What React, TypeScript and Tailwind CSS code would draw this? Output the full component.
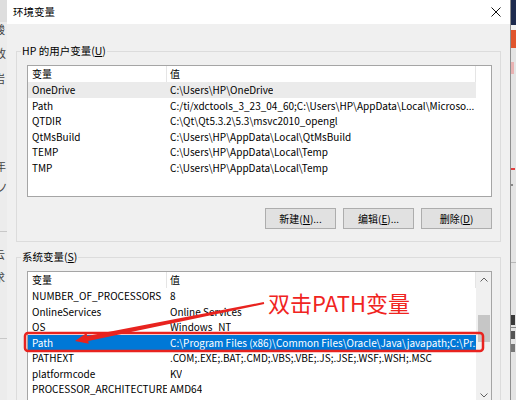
import React from "react";

const font = "font-['Noto_Sans_CJK_SC',sans-serif]";

const userVars: [string, string][] = [
  ["OneDrive", "C:\\Users\\HP\\OneDrive"],
  ["Path", "C:/ti/xdctools_3_23_04_60;C:\\Users\\HP\\AppData\\Local\\Microso..."],
  ["QTDIR", "C:\\Qt\\Qt5.3.2\\5.3\\msvc2010_opengl"],
  ["QtMsBuild", "C:\\Users\\HP\\AppData\\Local\\QtMsBuild"],
  ["TEMP", "C:\\Users\\HP\\AppData\\Local\\Temp"],
  ["TMP", "C:\\Users\\HP\\AppData\\Local\\Temp"],
];

const sysVars: [string, string][] = [
  ["NUMBER_OF_PROCESSORS", "8"],
  ["OnlineServices", "Online Services"],
  ["OS", "Windows_NT"],
  ["Path", "C:\\Program Files (x86)\\Common Files\\Oracle\\Java\\javapath;C:\\Pr..."],
  ["PATHEXT", ".COM;.EXE;.BAT;.CMD;.VBS;.VBE;.JS;.JSE;.WSF;.WSH;.MSC"],
  ["platformcode", "KV"],
  ["PROCESSOR_ARCHITECTURE", "AMD64"],
  ["PROCESSOR_IDENTIFIER", "Intel64 Family 6 Model 142 Stepping 10, GenuineIntel"],
  ["PROCESSOR_LEVEL", "6"],
];

const Header = () => (
  <div className="flex h-[16px] shrink-0 items-center leading-none">
    <div className="flex h-full w-[139px] items-center border-r border-[#e5e5e5] pl-[4px]">变量</div>
    <div className="flex h-full w-[309px] items-center border-r border-[#e5e5e5] pl-[3px]">值</div>
  </div>
);

const Row = ({ name, value, state }: { name: string; value: string; state?: "hover" | "sel" }) => (
  <div
    className={
      "flex h-[15.5px] w-[448px] shrink-0 whitespace-nowrap leading-[15.5px] " +
      (state === "sel" ? "bg-[#0078d7] text-white" : state === "hover" ? "bg-[#ebebeb]" : "")
    }
  >
    <div className="w-[139px] shrink-0 overflow-hidden pl-[4px]">{name}</div>
    <div className="overflow-hidden pl-[3px]">{value}</div>
  </div>
);

const Chevron = ({ up }: { up?: boolean }) => (
  <svg width="8" height="5" viewBox="0 0 8 5">
    <path d={up ? "M0.5 4.5 L4 1 L7.5 4.5" : "M0.5 0.5 L4 4 L7.5 0.5"} fill="none" stroke="#606060" strokeWidth="1" />
  </svg>
);

const Btn = ({ label, k, tail }: { label: string; k: string; tail: string }) => (
  <div className="flex h-[21px] w-[71px] items-center justify-center border border-[#adadad] bg-[#e1e1e1] leading-none">
    {label}(<span className="underline">{k}</span>){tail}
  </div>
);

export default function App() {
  return (
    <div className={`relative flex h-[400px] w-[516px] overflow-hidden bg-[#e6e6e6] text-[10px] text-black ${font}`}>
      {/* window behind, left */}
      <div className="flex w-[7px] shrink-0 flex-col overflow-hidden bg-[#ececec] text-[11px] leading-none text-[#444]">
        <div className="h-[22px] shrink-0 bg-[#dedede]" />
        <span className="-ml-[6px] mt-[2px]">酸</span>
        <span className="-ml-[5px] mt-[13px]">改</span>
        <span className="-ml-[6px] mt-[14px]">岩</span>
        <span className="-ml-[7px] mt-[9px]">a</span>
        <span className="-ml-[5px] mt-[57px]">年</span>
        <span className="-ml-[3px] mt-[10px]">ノ</span>
        <div className="mt-[38px] h-px shrink-0 bg-[#c8c8c8]" />
        <span className="-ml-[6px] mt-[17px]">云</span>
        <span className="-ml-[6px] mt-[12px]">求</span>
        <div className="mt-[55px] h-px shrink-0 bg-[#c8c8c8]" />
      </div>

      {/* dialog */}
      <div className="flex w-[504px] shrink-0 flex-col border-r border-[#8f8f8f] bg-[#f0f0f0]">
        <div className="flex h-[24px] shrink-0 items-center justify-between bg-white pl-[6px] pr-[9px]">
          <span className="text-[10.5px] leading-none">环境变量</span>
          <svg width="10" height="10" viewBox="0 0 10 10">
            <path d="M0.5 0.5 L9.5 9.5 M9.5 0.5 L0.5 9.5" stroke="#111" strokeWidth="1" />
          </svg>
        </div>

        <div className="flex flex-col px-[9px] pt-[20px]">
          <fieldset className="border border-[#dcdcdc] pb-[12px] pl-[10px] pr-[8px] pt-[7px]">
            <legend className="-ml-[6px] px-[1px] text-[10.5px] leading-[14px]">
              HP 的用户变量(<span className="underline">U</span>)
            </legend>
            <div className="flex h-[132px] w-[465px] flex-col border border-[#a5a5a5] bg-white">
              <Header />
              {userVars.map(([n, v], i) => (
                <Row key={n} name={n} value={v} state={i === 0 ? "hover" : undefined} />
              ))}
            </div>
            <div className="mt-[11px] flex justify-end gap-[7px]">
              <Btn label="新建" k="N" tail="..." />
              <Btn label="编辑" k="E" tail="..." />
              <Btn label="删除" k="D" tail="" />
            </div>
          </fieldset>

          <fieldset className="mt-[8px] border border-[#dcdcdc] pb-[12px] pl-[10px] pr-[8px] pt-[7px]">
            <legend className="-ml-[6px] px-[1px] text-[10.5px] leading-[14px]">
              系统变量(<span className="underline">S</span>)
            </legend>
            <div className="flex h-[133px] w-[465px] border border-[#a5a5a5] bg-white">
              <div className="flex w-[448px] shrink-0 flex-col overflow-hidden">
                <Header />
                {sysVars.map(([n, v], i) => (
                  <Row key={n} name={n} value={v} state={i === 3 ? "sel" : undefined} />
                ))}
              </div>
              <div className="flex w-[15px] shrink-0 flex-col items-center bg-[#f0f0f0]">
                <div className="flex h-[14px] w-full items-center justify-center">
                  <Chevron up />
                </div>
                <div className="mt-[29px] h-[27px] w-[12px] bg-[#c6c6c6]" />
                <div className="flex-1" />
                <div className="flex h-[16px] w-full items-center justify-center">
                  <Chevron />
                </div>
              </div>
            </div>
          </fieldset>
        </div>
      </div>

      {/* window behind, right */}
      <div className="flex w-[5px] shrink-0 flex-col bg-[#e4e4e4]">
        <div className="h-[25px] bg-[#1e2b4e]" />
        <div className="h-[5px] bg-[#f2f2f2]" />
        <div className="h-[18px] bg-[#e0552d]" />
        <div className="mt-[14px] h-[12px] w-[3px] bg-[#e9b3b3]" />
        <div className="mt-[94px] h-[2px] w-[4px] bg-[#e04040]" />
        <div className="mt-[14px] h-[2px] w-[2px] bg-[#888]" />
        <div className="mt-[76px] h-px bg-[#b8b8b8]" />
        <div className="mt-[52px] h-[10px] w-[4px] bg-[#3a3a3a]" />
        <div className="mt-[2px] h-px bg-[#888]" />
        <div className="mt-[3px] h-[8px] w-[4px] bg-[#555]" />
        <div className="mt-[5px] h-[8px] w-[4px] bg-[#777]" />
      </div>

      {/* red annotation */}
      <svg className="pointer-events-none absolute left-0 top-0" width="516" height="400" viewBox="0 0 516 400">
        <rect x="25" y="333" width="458" height="18" rx="3" fill="none" stroke="#e8231f" strokeWidth="2.5" />
        <polygon
          points="263.8,302 264.2,304 88.2,340.9 88.8,343.8 75,341 86.6,333 87.2,336"
          fill="#e8231f"
        />
      </svg>
      <span className="pointer-events-none absolute left-[268px] top-[291px] text-[22px] leading-none text-[#f0241f]">
        双击PATH变量
      </span>
    </div>
  );
}
